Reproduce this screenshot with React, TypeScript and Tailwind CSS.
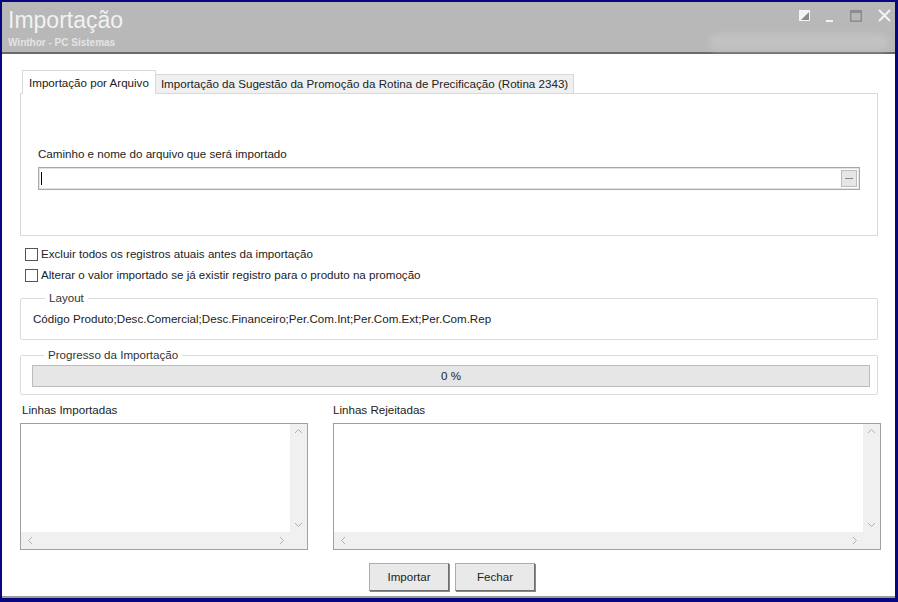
import { ReactNode } from "react";

const font = "font-['Tahoma','Liberation_Sans',sans-serif]";

const GroupBox = ({ title, className, children }: { title: string; className?: string; children: ReactNode }) => (
    <fieldset className={`rounded-[2px] border border-[#dcdcdc] ${className ?? ""}`}>
        <legend className="ml-[12px] px-[4px] text-[11.6px] leading-[12px] text-[#333]">{title}</legend>
        {children}
    </fieldset>
);

const Checkbox = ({ label }: { label: string }) => (
    <label className="flex items-center gap-[3px] text-[11.6px] leading-[14px] text-[#222]">
        <span className="h-[13px] w-[13px] border border-[#555] bg-white" />
        {label}
    </label>
);

const ListBox = ({ className }: { className?: string }) => (
    <div className={`flex flex-col border border-[#a0a0a0] bg-white ${className ?? ""}`}>
        <div className="flex flex-1">
            <div className="flex-1" />
            <div className="flex w-[17px] flex-col items-center justify-between bg-[#f0f0f0] py-[4px] text-[#b0b0b0]">
                <svg width="9" height="6" viewBox="0 0 9 6"><path d="M1 5 L4.5 1.5 L8 5" fill="none" stroke="currentColor" /></svg>
                <svg width="9" height="6" viewBox="0 0 9 6"><path d="M1 1 L4.5 4.5 L8 1" fill="none" stroke="currentColor" /></svg>
            </div>
        </div>
        <div className="flex h-[17px] items-center justify-between bg-[#f0f0f0] pl-[6px] pr-[22px] text-[#b0b0b0]">
            <svg width="6" height="9" viewBox="0 0 6 9"><path d="M5 1 L1.5 4.5 L5 8" fill="none" stroke="currentColor" /></svg>
            <svg width="6" height="9" viewBox="0 0 6 9"><path d="M1 1 L4.5 4.5 L1 8" fill="none" stroke="currentColor" /></svg>
        </div>
    </div>
);

const Button = ({ children }: { children: ReactNode }) => (
    <button className="h-[28px] w-[80px] border border-[#adadad] border-b-[#707070] border-r-[#707070] bg-[#e9e9e9] text-[11.6px] text-[#222] shadow-[1px_1px_0_#888]">
        {children}
    </button>
);

export default function App() {
    return (
        <div className={`h-[602px] w-[898px] bg-[#08087e] pb-[4px] pl-[2px] pr-[3px] pt-[2px] ${font}`}>
            <div className="flex h-full flex-col border-b-2 border-[#9a9a9a] bg-white">
                {/* title bar */}
                <div className="relative flex h-[52px] shrink-0 items-start justify-between border-b-2 border-[#6a6a6a] bg-[#b8b8b8] pl-[6px]">
                    <div className="flex flex-col">
                        <span className="mt-[4px] text-[23px] leading-[28px] text-[#f2f2f2]">Importação</span>
                        <span className="mt-[3px] text-[10px] font-bold leading-[12px] text-[#e4e4e4]">Winthor - PC Sistemas</span>
                    </div>
                    <div className="absolute bottom-[2px] right-[6px] h-[16px] w-[180px] rounded-full bg-[#c2c2c2] blur-[3px]" />
                    <div className="relative mr-[4px] mt-[7px] flex items-center gap-[16px]">
                        <svg width="11" height="11" viewBox="0 0 11 11">
                            <rect x="0" y="0" width="11" height="11" fill="#f4f4f4" />
                            <path d="M10 2 L10 10 L2 10 Z" fill="#8a8a8a" />
                        </svg>
                        <svg width="8" height="12" viewBox="0 0 8 12"><rect x="0" y="10" width="7" height="2" fill="#f4f4f4" /></svg>
                        <svg width="12" height="12" viewBox="0 0 12 12">
                            <rect x="0.75" y="0.75" width="10.5" height="10.5" fill="none" stroke="#8c8c8c" strokeWidth="1.5" />
                            <rect x="0" y="0" width="12" height="3" fill="#8c8c8c" />
                        </svg>
                        <svg width="13" height="13" viewBox="0 0 13 13">
                            <path d="M1 1 L12 12 M12 1 L1 12" stroke="#f4f4f4" strokeWidth="2" />
                        </svg>
                    </div>
                </div>

                <div className="flex flex-1 flex-col pl-[18px] pr-[17px] pt-[16px]">
                    {/* tabs */}
                    <div className="flex items-end pl-[2px]">
                        <div className="relative z-10 -mb-px flex h-[24px] items-center border border-b-0 border-[#d9d9d9] bg-white px-[6px] text-[11.6px] text-[#222]">
                            Importação por Arquivo
                        </div>
                        <div className="flex h-[19px] items-center border border-b-0 border-l-0 border-[#d9d9d9] bg-[#f0f0f0] px-[5px] text-[11.6px] text-[#222]">
                            Importação da Sugestão da Promoção da Rotina de Precificação (Rotina 2343)
                        </div>
                    </div>
                    <div className="flex h-[143px] flex-col border border-[#d9d9d9] px-[17px] pt-[53px]">
                        <span className="text-[11.6px] leading-[14px] text-[#222]">Caminho e nome do arquivo que será importado</span>
                        <div className="mt-[6px] flex h-[23px] items-stretch border border-[#a9a9a9] bg-white shadow-[inset_0_0_0_1px_#e3e3e3]">
                            <div className="flex flex-1 items-center pl-[2px]">
                                <span className="h-[13px] w-px bg-black" />
                            </div>
                            <div className="m-[2px] flex w-[16px] items-center justify-center border border-[#bcbcbc] bg-[#e6e6e6]">
                                <span className="h-px w-[8px] bg-[#888]" />
                            </div>
                        </div>
                    </div>

                    {/* options */}
                    <div className="mt-[11px] flex flex-col gap-[7px] pl-[5px]">
                        <Checkbox label="Excluir todos os registros atuais antes da importação" />
                        <Checkbox label="Alterar o valor importado se já existir registro para o produto na promoção" />
                    </div>

                    <GroupBox title="Layout" className="mt-[10px] h-[48px] pl-[12px]">
                        <span className="mt-[8px] block text-[11.6px] leading-[14px] text-[#222]">
                            Código Produto;Desc.Comercial;Desc.Financeiro;Per.Com.Int;Per.Com.Ext;Per.Com.Rep
                        </span>
                    </GroupBox>

                    <GroupBox title="Progresso da Importação" className="mt-[9px] h-[46px] pl-[11px] pr-[7px]">
                        <div className="mt-[4px] flex h-[22px] items-center justify-center border border-[#bcbcbc] bg-[#e6e6e6] text-[11.6px] text-[#222]">
                            0 %
                        </div>
                    </GroupBox>

                    {/* results */}
                    <div className="-mr-[3px] mt-[8px] flex gap-[25px]">
                        <div className="flex w-[288px] flex-col">
                            <span className="pl-[2px] text-[11.6px] leading-[14px] text-[#222]">Linhas Importadas</span>
                            <ListBox className="mt-[6px] h-[127px]" />
                        </div>
                        <div className="flex flex-1 flex-col">
                            <span className="text-[11.6px] leading-[14px] text-[#222]">Linhas Rejeitadas</span>
                            <ListBox className="mt-[6px] h-[127px]" />
                        </div>
                    </div>

                    <div className="mt-[13px] flex justify-center gap-[6px] pl-[6px]">
                        <Button>Importar</Button>
                        <Button>Fechar</Button>
                    </div>
                </div>
            </div>
        </div>
    );
}
